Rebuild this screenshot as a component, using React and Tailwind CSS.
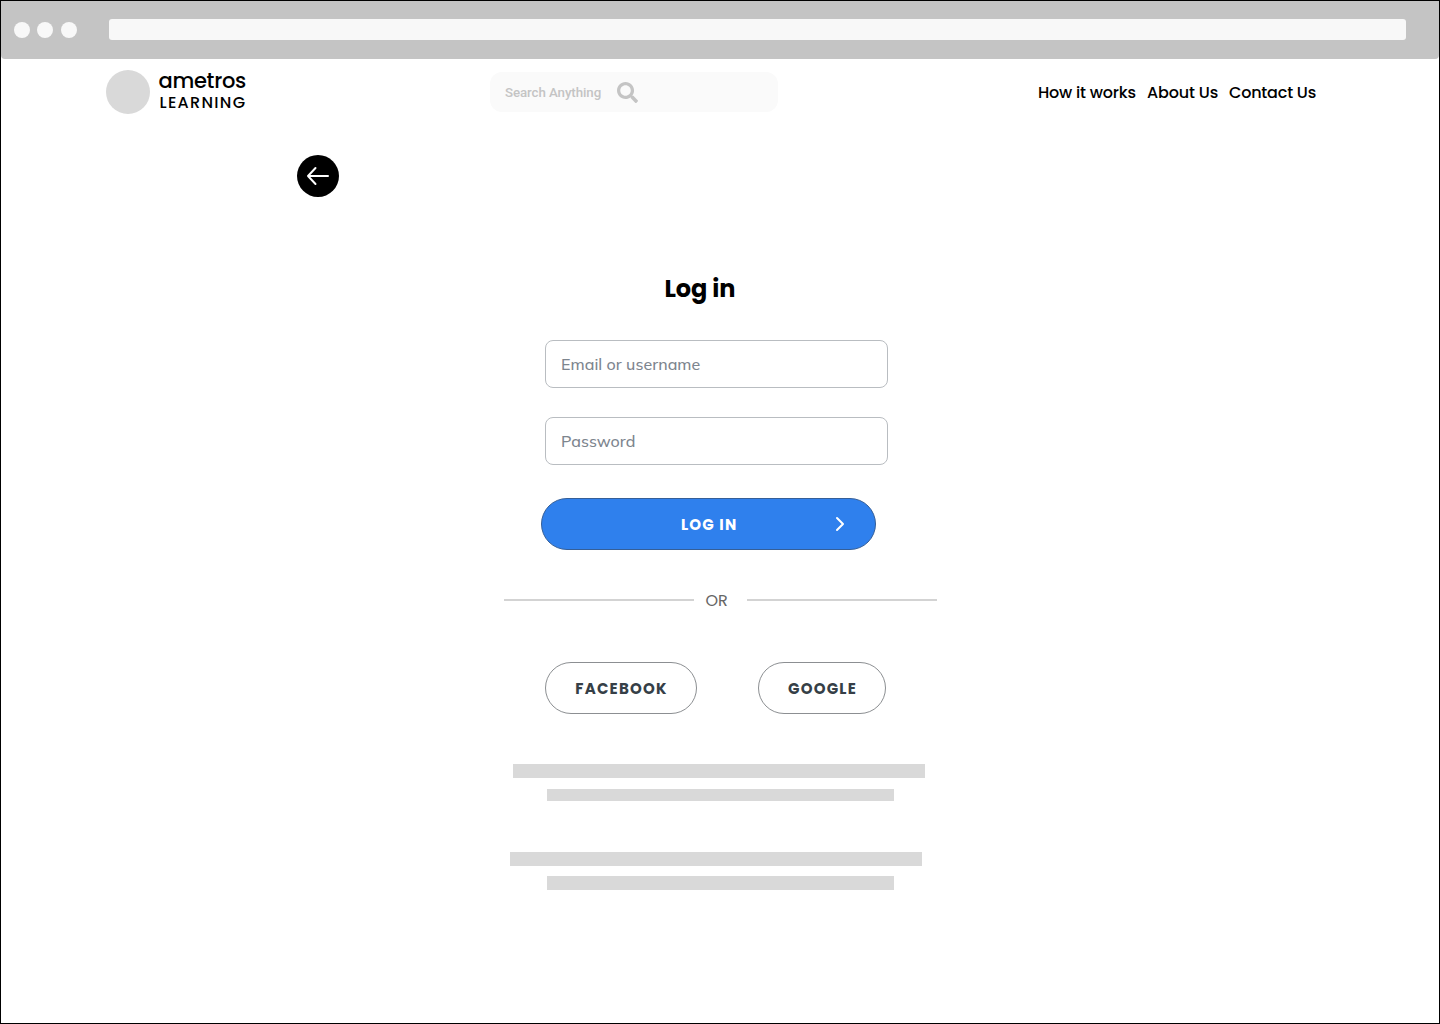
import { useState } from "react";
import { FaSearch } from "react-icons/fa";

function BrowserBar() {
  return (
    <div className="flex h-[58px] shrink-0 items-center rounded-b-[4px] bg-[#c4c4c4] pl-[13px]">
      <div className="size-4 rounded-full bg-[#f8f8f8]" />
      <div className="ml-[7px] size-4 rounded-full bg-[#f8f8f8]" />
      <div className="ml-2 size-4 rounded-full bg-[#f8f8f8]" />
      <div className="mb-px ml-8 h-[21px] w-[1297px] rounded-[3px] bg-[#f8f8f8]" />
    </div>
  );
}

function Header() {
  return (
    <header className="flex h-[66px] shrink-0 items-center pl-[105px] text-black">
      <div className="size-11 rounded-full bg-[#d9d9d9]" />
      <div className="ml-[8.5px] w-[88.5px] whitespace-nowrap font-medium">
        <div className="text-[21px] leading-[22px] tracking-[-0.3px]">ametros</div>
        <div className="pl-px text-[16px] leading-[22px] tracking-[1.3px]">LEARNING</div>
      </div>

      <div className="ml-[243px] flex h-10 w-[288px] items-center rounded-xl bg-[#fafafa] pl-[15px]">
        <span className="w-[96px] pt-px whitespace-nowrap font-['Roboto',sans-serif] text-[13.3px] font-medium tracking-[-0.08px] text-[#c4c4c4]">
          Search Anything
        </span>
        <FaSearch className="ml-4 size-[21px] text-[#c4c4c4]" />
      </div>

      <nav className="ml-[260px] flex pt-0.5 whitespace-nowrap text-base font-medium">
        <a href="#" className="w-[109px] tracking-[-0.2px]">How it works</a>
        <a href="#" className="w-[82px] tracking-[-0.15px]">About Us</a>
        <a href="#" className="tracking-[-0.2px]">Contact Us</a>
      </nav>
    </header>
  );
}

export default function App() {
  const [username, setUsername] = useState("");
  const [password, setPassword] = useState("");

  return (
    <div className="flex h-[1024px] w-[1440px] flex-col overflow-hidden border border-black bg-white font-['Poppins','Inter',sans-serif]">
      <BrowserBar />
      <Header />

      <main>
        {/* Back */}
        <button className="mt-[30px] ml-[296px] flex size-[42px] items-center justify-center rounded-full bg-black">
          <svg width="24" height="20" viewBox="0 0 24 20" fill="none" stroke="white" strokeWidth="2">
            <path d="M22 10H2M9.5 2L2 10L9.5 18" strokeLinejoin="round" strokeLinecap="round" />
          </svg>
        </button>

        <div className="ml-[503px] w-[433px]">
          <h1 className="mt-[74px] pl-[160.5px] text-2xl leading-9 font-bold tracking-[-0.1px] whitespace-nowrap text-black">
            Log in
          </h1>

          <form className="flex flex-col" onSubmit={(e) => e.preventDefault()}>
            <input
              type="text"
              placeholder="Email or username"
              value={username}
              onChange={(e) => setUsername(e.target.value)}
              className="mt-[33px] ml-[41px] h-12 w-[343px] rounded-lg border border-[#b9bdc1] px-[15px] font-['Mulish','Muli','Nunito',sans-serif] text-base font-medium tracking-[0.05px] outline-none placeholder:text-[#7d858e]"
            />
            <input
              type="password"
              placeholder="Password"
              value={password}
              onChange={(e) => setPassword(e.target.value)}
              className="mt-[29px] ml-[41px] h-12 w-[343px] rounded-lg border border-[#b9bdc1] px-[15px] font-['Mulish','Muli','Nunito',sans-serif] text-base font-medium tracking-[0.05px] outline-none placeholder:text-[#7d858e]"
            />
            <button
              type="submit"
              className="mt-[33px] ml-[37px] flex h-[52px] w-[335px] items-center justify-between rounded-full border border-[#355f98] bg-[#2f80ed] pr-[30px] pl-[139px] text-[15px] font-bold tracking-[1.2px] text-white"
            >
              <span className="pt-0.5">LOG IN</span>
              <svg width="10" height="16" viewBox="0 0 10 16" fill="none" stroke="white" strokeWidth="2">
                <path d="M2 2L8 8L2 14" strokeLinecap="round" strokeLinejoin="round" />
              </svg>
            </button>
          </form>

          <div className="mt-[38px] flex h-6 items-center">
            <div className="h-0.5 w-[190px] bg-[#d3d3d3]" />
            <span className="w-[53px] pt-0.5 pl-[11.5px] text-base leading-6 text-[#666]">OR</span>
            <div className="h-0.5 w-[190px] bg-[#d3d3d3]" />
          </div>

          {/* Social login */}
          <div className="mt-[50px] ml-[41px] flex gap-[61px] text-[15px] font-bold tracking-[1.2px] text-[#363f47]">
            <button className="h-[52px] w-[152px] rounded-full border border-[#8c8f92] pt-0.5 pl-px">FACEBOOK</button>
            <button className="h-[52px] w-[128px] rounded-full border border-[#8c8f92] pt-0.5 pl-px">GOOGLE</button>
          </div>

          <div className="mt-[50px] ml-[9px] h-3.5 w-[412px] bg-[#d9d9d9]" />
          <div className="mt-[11px] ml-[43px] h-3 w-[347px] bg-[#d9d9d9]" />
          <div className="mt-[51px] ml-[6px] h-3.5 w-[412px] bg-[#d9d9d9]" />
          <div className="mt-2.5 ml-[43px] h-3.5 w-[347px] bg-[#d9d9d9]" />
        </div>
      </main>
    </div>
  );
}
